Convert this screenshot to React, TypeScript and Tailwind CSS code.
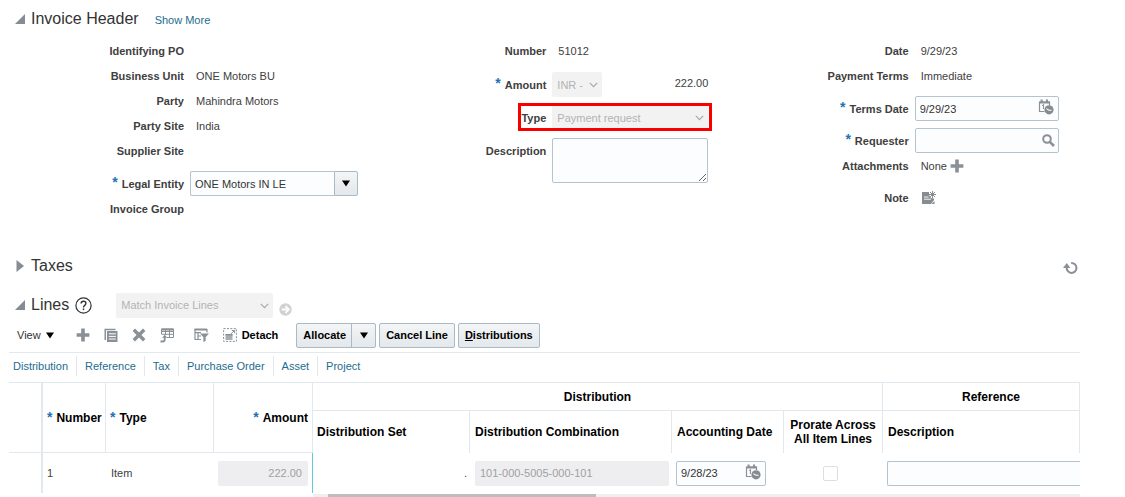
import type { ReactNode } from "react";
import { clsx } from "clsx";

const VIEW_LINKS = ["Distribution", "Reference", "Tax", "Purchase Order", "Asset", "Project"];

const FIELD = "h-[25px] rounded-xs border border-[#b4c3cd] bg-[#fcfdfe] px-1 text-[11px] text-[#333]";
const BUTTON =
  "flex h-[25px] items-center rounded-xs border border-[#a9b9c6] bg-linear-to-b from-[#f3f5f6] to-[#e4e8ea] text-[11px] font-bold text-black";

function Star() {
  return (
    <span aria-hidden className="mr-1 pb-1 text-sm leading-none font-bold text-[#2272b4]">
      *
    </span>
  );
}

function Row({
  label,
  htmlFor,
  required,
  className,
  children,
}: {
  label: string;
  htmlFor?: string;
  required?: boolean;
  className?: string;
  children?: ReactNode;
}) {
  return (
    <div className={clsx("flex min-h-[25px]", className)}>
      <label
        htmlFor={htmlFor}
        className="flex h-[25px] w-[184px] flex-none items-center justify-end font-bold text-[#404040]"
      >
        {required && <Star />}
        {label}
      </label>
      <div className="ml-1.5 flex min-h-[25px] items-center">{children}</div>
    </div>
  );
}

function Value({ children }: { children: ReactNode }) {
  return <span className="pl-1.5">{children}</span>;
}

function DisabledSelect({
  id,
  label,
  value,
  className,
}: {
  id: string;
  label?: string;
  value: string;
  className?: string;
}) {
  return (
    <div className={clsx("relative", className)}>
      <select
        id={id}
        aria-label={label}
        disabled
        className="block h-[25px] w-full appearance-none rounded-xs bg-[#f2f2f2] pr-4 pl-[5px] text-[11px] text-[#b3b3b3] opacity-100"
      >
        <option>{value}</option>
      </select>
      <svg viewBox="0 0 9 6" className="absolute top-[10px] right-1 h-1.5 w-[9px]" fill="none" stroke="#a8a8a8" strokeWidth="1.2">
        <path d="M.8 .8 4.5 4.6 8.2 .8" />
      </svg>
    </div>
  );
}

function DateField({ id, label, value, className }: { id: string; label?: string; value: string; className?: string }) {
  return (
    <div className={clsx("relative", className)}>
      <input id={id} aria-label={label} defaultValue={value} className={clsx(FIELD, "block w-full")} />
      <button aria-label="Select Date" className="absolute top-[3px] right-[5px]">
        <svg viewBox="0 0 16 16" className="h-4 w-4">
          <path d="M1.5 3v9.5h5M1.5 3.2h10v3" fill="none" stroke="#8a9095" strokeWidth="1.2" />
          <path d="M1 2.4h11v2H1zM2.6.6h2v2.6h-2zM8 .6h2v2.6H8z" fill="#8a9095" />
          <path d="M4.2 6.6 5.5 5.8V10" fill="none" stroke="#8a9095" strokeWidth="1.1" />
          <circle cx="11" cy="10.8" r="4.6" fill="#858b90" />
          <path d="M8.4 9.6 11 11.2h2.6" fill="none" stroke="#fff" strokeWidth="1.1" />
        </svg>
      </button>
    </div>
  );
}

function Caret({ className }: { className?: string }) {
  return (
    <svg viewBox="0 0 10 7" className={clsx("h-[7px] w-2.5", className)} fill="#000">
      <path d="M1 .5h8L5 6.5z" />
    </svg>
  );
}

function OpenTriangle() {
  return (
    <svg viewBox="0 0 10 10" className="h-2.5 w-2.5" fill="#868c91">
      <path d="M10 0v10H0z" />
    </svg>
  );
}

function PlusIcon() {
  return (
    <svg viewBox="0 0 14 14" className="h-3.5 w-3.5" fill="#8a9095">
      <path d="M5.2.6h3.6v4.6h4.6v3.6H8.8v4.6H5.2V8.8H.6V5.2h4.6z" />
    </svg>
  );
}

function Section({ title, open, children }: { title: string; open?: boolean; children?: ReactNode }) {
  return (
    <div className="flex h-6 items-center">
      <button aria-label={`Toggle ${title}`} className="mr-1.5 flex w-2.5 justify-center">
        {open ? (
          <OpenTriangle />
        ) : (
          <svg viewBox="0 0 8 12" className="h-3 w-2" fill="#868c91">
            <path d="M.5 0 8 6 .5 12z" />
          </svg>
        )}
      </button>
      <h2 className="text-base leading-6 text-[#333]">{title}</h2>
      {children}
    </div>
  );
}

function InvoiceHeader() {
  return (
    <div className="grid grid-cols-3">
      <div>
        <Row label="Identifying PO" />
        <Row label="Business Unit">
          <Value>ONE Motors BU</Value>
        </Row>
        <Row label="Party">
          <Value>Mahindra Motors</Value>
        </Row>
        <Row label="Party Site">
          <Value>India</Value>
        </Row>
        <Row label="Supplier Site" />
        <Row label="Legal Entity" htmlFor="legal-entity" required className="mt-2">
          <input id="legal-entity" defaultValue="ONE Motors IN LE" className={clsx(FIELD, "w-36 rounded-r-none border-r-0")} />
          <button aria-label="Search Legal Entity" className={clsx(BUTTON, "w-6 justify-center rounded-l-none")}>
            <Caret />
          </button>
        </Row>
        <Row label="Invoice Group" />
      </div>

      <div>
        <Row label="Number">
          <Value>51012</Value>
        </Row>
        <Row label="Amount" htmlFor="currency" required className="mt-[9px]">
          <div className="flex w-[156px] justify-between">
            <DisabledSelect id="currency" value="INR -" className="w-[50px]" />
            <span className="leading-[22px]">222.00</span>
          </div>
        </Row>
        <Row label="Type" htmlFor="type" className="relative mt-2">
          <DisabledSelect id="type" value="Payment request" className="w-[156px]" />
          <div className="pointer-events-none absolute -top-0.5 left-[156px] h-7 w-[194px] border-3 border-[#f80000]" />
        </Row>
        <Row label="Description" htmlFor="description" className="mt-2">
          <textarea id="description" className="block h-[45px] w-[156px] rounded-xs border border-[#b4c3cd] bg-[#fcfdfe] p-1" />
        </Row>
      </div>

      <div>
        <Row label="Date">
          <Value>9/29/23</Value>
        </Row>
        <Row label="Payment Terms">
          <Value>Immediate</Value>
        </Row>
        <Row label="Terms Date" htmlFor="terms-date" required className="mt-2">
          <DateField id="terms-date" value="9/29/23" className="w-36" />
        </Row>
        <Row label="Requester" htmlFor="requester" required className="mt-[7px]">
          <div className="relative w-36">
            <input id="requester" className={clsx(FIELD, "block w-full")} />
            <button aria-label="Search Requester" className="absolute top-1.5 right-1">
              <svg viewBox="0 0 13 13" className="h-[13px] w-[13px]" fill="none" stroke="#8a9095" strokeWidth="2">
                <circle cx="5" cy="5" r="3.8" />
                <path d="m7.8 7.8 4.2 4.2" strokeWidth="2.6" />
              </svg>
            </button>
          </div>
        </Row>
        <Row label="Attachments">
          <Value>None</Value>
          <button aria-label="Manage Attachments" className="ml-[3px]">
            <PlusIcon />
          </button>
        </Row>
        <Row label="Note" className="mt-[7px]">
          <button aria-label="Create Note" className="ml-1.5">
            <svg viewBox="0 0 15 14" className="h-3.5 w-[15px]" fill="#868c91">
              <path d="M1 1h7v3l2 3 3 .5V9l-3 4H1z" />
              <path d="M3 6h4.5M3 8.2h7" stroke="#fff" strokeWidth=".9" />
              <path d="M11.5 0v7M8 3.5h7M9 1l5 5M14 1 9 6" stroke="#868c91" strokeWidth="1" />
              <path d="M13.5 10v3h-3z" />
            </svg>
          </button>
        </Row>
      </div>
    </div>
  );
}

function Toolbar() {
  return (
    <div className="flex h-[35px] items-center border-b border-[#e1e8ee] pl-2">
      <button className="flex items-center gap-1 text-[#333]">
        View <Caret />
      </button>
      <div className="ml-[21px] flex items-center gap-3.5">
        <button aria-label="Add Row">
          <PlusIcon />
        </button>
        <button aria-label="Duplicate">
          <svg viewBox="0 0 14 14" className="h-3.5 w-3.5" fill="#8a9095">
            <path d="M.5 12V.8h11v1.4H2V12z" />
            <path d="M3 3h10.5v11H3z" />
            <path d="M4.8 5.8h7M4.8 8.4h7M4.8 11h7" stroke="#fff" strokeWidth="1" />
          </svg>
        </button>
        <button aria-label="Delete">
          <svg viewBox="0 0 14 14" className="h-3.5 w-3.5" fill="none" stroke="#8a9095" strokeWidth="3.4">
            <path d="m1.8 1.8 10.4 10.4M12.2 1.8 1.8 12.2" />
          </svg>
        </button>
        <button aria-label="Export">
          <svg viewBox="0 0 14 15" className="h-[15px] w-3.5" fill="none" stroke="#8a9095">
            <path d="M1.5 6V1h12v8.5H7M1.5 3.5h12M1.5 6.3h12M5.5 1v6M9.5 1v8.5" />
            <path d="M1.5 1.5h12" strokeWidth="2" />
            <path d="M.5 13.5h2.2q2 0 2-2V9" strokeWidth="1.8" />
            <path d="M2 9.8 4.7 6.8 7.4 9.8z" fill="#8a9095" stroke="none" />
          </svg>
        </button>
      </div>
      <button aria-label="Query By Example" className="ml-5">
        <svg viewBox="0 0 15 14" className="h-3.5 w-[15px]" fill="none" stroke="#8a9095">
          <path d="M.5 1.5h12.5" strokeWidth="2" />
          <path d="M13 1v3.5M1 1v10.5h6M1 4.7h6M4 4.7v6.8M4 8h3" strokeWidth="1.2" />
          <path d="M6 5.5h9l-3.4 3.8V13L9.4 14V9.3z" fill="#8a9095" stroke="none" />
        </svg>
      </button>
      <button className="ml-3.5 flex items-center gap-[5px] font-bold text-black">
        <svg viewBox="0 0 14 14" className="h-3.5 w-3.5" fill="none" stroke="#8a9095">
          <path d="M.6.6h12.8v12.8H.6z" strokeDasharray="2 1.4" />
          <path d="M2.5 6h7v6h-7z" fill="#a9adb1" stroke="none" />
          <path d="M2.5 6.7h7" strokeWidth="1.4" />
          <path d="M8 5.8 11 3M8.8 2.5h2.8v2.8" />
        </svg>
        Detach
      </button>
      <div className="ml-[18px] flex gap-[3px]">
        <div className={BUTTON}>
          <button className="pr-[5px] pl-1.5">Allocate</button>
          <button aria-label="Allocate Menu" className="flex h-[23px] w-6 items-center justify-center border-l border-[#a9b9c6]">
            <Caret />
          </button>
        </div>
        <button className={clsx(BUTTON, "px-1.5")}>Cancel Line</button>
        <button className={clsx(BUTTON, "px-1.5")}>
          <u>D</u>istributions
        </button>
      </div>
    </div>
  );
}

function LinesTable() {
  const line = "border-[#e1e8ee]";
  return (
    <table className={clsx("w-full table-fixed border-separate border-spacing-0 border-t", line)}>
      <colgroup>
        <col className="w-8" />
        <col className="w-16" />
        <col className="w-[108px]" />
        <col className="w-[99px]" />
        <col className="w-[157px]" />
        <col className="w-[202px]" />
        <col className="w-28" />
        <col className="w-[99px]" />
        <col />
      </colgroup>
      <thead className="text-left text-xs text-black">
        <tr className="h-7">
          <th rowSpan={2} className={clsx("border-b", line)} />
          <th rowSpan={2} className={clsx("border-b border-l-2 pl-1 whitespace-nowrap", line)}>
            <Star />
            Number
          </th>
          <th rowSpan={2} className={clsx("border-b border-l pl-1", line)}>
            <Star />
            Type
          </th>
          <th rowSpan={2} className={clsx("border-b border-l pr-1 text-right", line)}>
            <Star />
            Amount
          </th>
          <th colSpan={4} className={clsx("border-b border-l text-center", line)}>
            Distribution
          </th>
          <th className={clsx("border-r border-b border-l pl-5 text-center", line)}>Reference</th>
        </tr>
        <tr className="h-[42px]">
          <th className={clsx("border-l pl-1", line)}>Distribution Set</th>
          <th className={clsx("border-l pl-[5px]", line)}>Distribution Combination</th>
          <th className={clsx("border-l pl-[5px]", line)}>Accounting Date</th>
          <th className={clsx("border-l text-center leading-[14px]", line)}>Prorate Across All Item Lines</th>
          <th className={clsx("border-r border-l pl-[5px]", line)}>Description</th>
        </tr>
      </thead>
      <tbody>
        <tr className="h-10">
          <td />
          <td className={clsx("border-l-2 pl-1", line)}>1</td>
          <td className="pl-1.5">Item</td>
          <td className="pr-1 pl-[5px]">
            <input
              aria-label="Amount"
              disabled
              defaultValue="222.00"
              className="block h-[25px] w-full rounded-xs bg-[#eeeef0] px-1.5 text-right text-[#a0a0a0]"
            />
          </td>
          <td className="border-l border-[#62c8de] pr-0.5 text-right">.</td>
          <td className="pr-0.5 pl-1.5">
            <input
              aria-label="Distribution Combination"
              disabled
              defaultValue="101-000-5005-000-101"
              className="block h-[25px] w-full rounded-xs bg-[#eeeef0] px-[5px] text-[#a0a0a0]"
            />
          </td>
          <td className="pl-[5px]">
            <DateField id="accounting-date" label="Accounting Date" value="9/28/23" className="w-[90px]" />
          </td>
          <td className="pr-1">
            <input
              type="checkbox"
              aria-label="Prorate Across All Item Lines"
              className="mx-auto block h-[15px] w-[15px] appearance-none rounded-xs border border-[#dedede] bg-white"
            />
          </td>
          <td className="pl-[5px]">
            <input aria-label="Description" className={clsx(FIELD, "block w-full rounded-r-none border-r-0")} />
          </td>
        </tr>
      </tbody>
    </table>
  );
}

export default function App() {
  return (
    <main className="bg-white font-['Liberation_Sans',Arial,sans-serif] text-[11px] leading-[14px] text-[#404040]">
      <section className="pt-[7px] pr-[38px]">
        <div className="mb-[7px] pl-[15px]">
          <Section title="Invoice Header" open>
            <a href="#more" className="mt-0.5 ml-4 text-[#1d6c8f]">
              Show More
            </a>
          </Section>
        </div>
        <InvoiceHeader />
      </section>

      <section className="mt-[33px] flex items-center justify-between pr-[47px] pl-[15px]">
        <Section title="Taxes" />
        <button aria-label="Refresh" className="pt-1">
          <svg viewBox="0 0 15 14" className="h-3.5 w-[15px]" fill="none" stroke="#8a9095" strokeWidth="2">
            <path d="M8.2 2.1A4.9 4.9 0 1 1 3.7 6.5" />
            <path d="M0 7 3.8 2 7.4 7z" fill="#8a9095" stroke="none" />
          </svg>
        </button>
      </section>

      <section className="mt-[15px]">
        <div className="pl-[15px]">
          <Section title="Lines" open>
            <button aria-label="Help" className="ml-1.5">
              <svg viewBox="0 0 17 17" className="h-[17px] w-[17px]" fill="none" stroke="#333" strokeWidth="1.2">
                <circle cx="8.5" cy="8.5" r="7.6" />
                <path d="M6.1 6.6q0-2.4 2.4-2.4t2.4 2.1q0 1.2-1.2 2T8.5 10.4" strokeWidth="1.4" />
                <path d="M8.5 11.5v1.6" strokeWidth="1.5" />
              </svg>
            </button>
            <DisabledSelect id="match" label="Match Invoice Lines" value="Match Invoice Lines" className="ml-6 w-[157px]" />
            <button aria-label="Go" disabled className="mt-2 ml-1.5">
              <svg viewBox="0 0 13 13" className="h-[13px] w-[13px]">
                <circle cx="6.5" cy="6.5" r="6.2" fill="#d2d2d2" />
                <path d="M2.8 6.5h5M6.5 3.2l3.3 3.3-3.3 3.3" fill="none" stroke="#fff" strokeWidth="1.8" />
              </svg>
            </button>
          </Section>
        </div>

        <div className="pt-px pr-[45px] pl-[9px]">
          <Toolbar />
          <nav className="flex h-[29px] items-center pb-1">
            {VIEW_LINKS.map((name, i) => (
              <a
                key={name}
                href="#lines"
                className={clsx(
                  "flex h-5 items-center text-[#1d6c8f]",
                  i === 0 ? "pr-2 pl-1" : "border-l border-[#e1e8ee] px-2",
                )}
              >
                {name}
              </a>
            ))}
          </nav>
          <LinesTable />
          <div className="mt-px ml-[304px] h-[3px] bg-[#f0f0f0]">
            <div className="ml-[15px] h-full w-[35%] bg-[#bdbdbd]" />
          </div>
        </div>
      </section>
    </main>
  );
}
